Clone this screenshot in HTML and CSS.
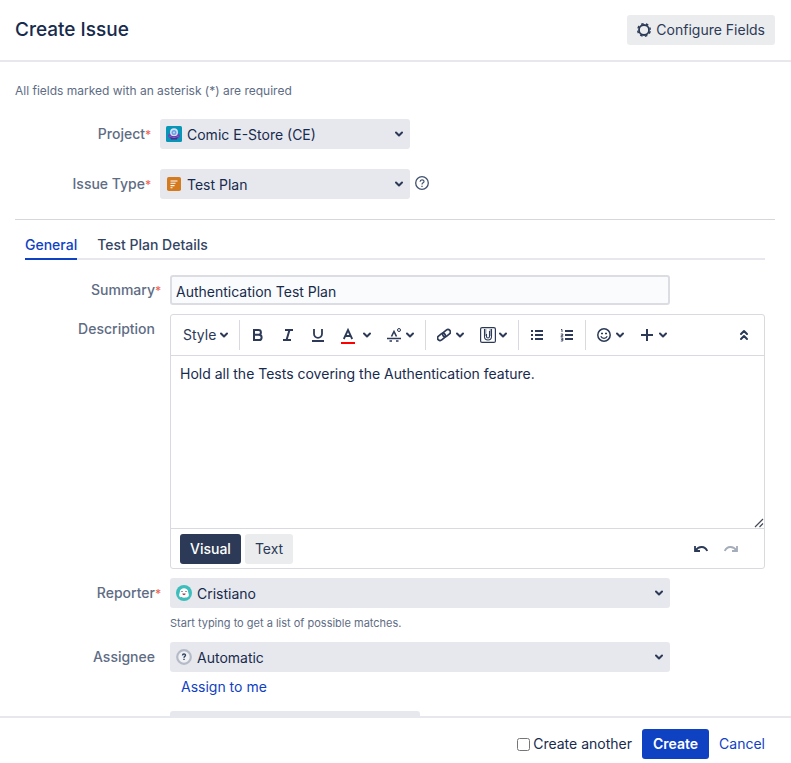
FILE: index.html
```html
<!DOCTYPE html>
<html lang="en">
<head>
  <meta charset="UTF-8" />
  <meta name="viewport" content="width=device-width, initial-scale=1" />
  <title>Create Issue</title>
  <link rel="stylesheet" href="styles.css">
</head>
<body>
  <!-- shared icon -->
  <svg class="defs" width="0" height="0" aria-hidden="true">
    <symbol id="chevron" viewBox="0 0 8 8"><path d="M1 2.5l3 3 3-3" fill="none" stroke="currentColor" stroke-width="2" stroke-linecap="round" stroke-linejoin="round"/></symbol>
  </svg>

  <form class="dialog">
    <header class="dialog-header">
      <h1>Create Issue</h1>
      <button type="button" class="btn">
        <svg width="14" height="14" viewBox="0 0 14 14"><circle cx="7" cy="7" r="5" fill="none" stroke="currentColor" stroke-width="1.8"/><circle cx="7" cy="7" r="6.3" fill="none" stroke="currentColor" stroke-width="1.4" stroke-dasharray="2.5 2.448" stroke-dashoffset="3.7"/></svg>
        Configure Fields
      </button>
    </header>

    <main class="dialog-body">
      <p class="required-note">All fields marked with an asterisk (*) are required</p>

      <div class="top-fields">
        <div class="field">
          <label for="project">Project<span class="star">*</span></label>
          <div class="select medium">
            <svg class="select-icon" width="16" height="16" viewBox="0 0 16 16"><rect width="16" height="16" rx="1.5" fill="#0796b5"/><ellipse cx="8" cy="9.8" rx="6" ry="3.2" fill="#6f42b8"/><path d="M4 10h8l-1 3.6H5z" fill="#4b2a91"/><circle cx="8" cy="6.2" r="4" fill="#d5e1f8"/><circle cx="8" cy="6.6" r="2.5" fill="#6b9de0"/><circle cx="8" cy="6.6" r="1.1" fill="#b9d5fa"/><path d="M3.5 10.4q4.5 2.4 9 0" fill="none" stroke="#8c5fd0"/></svg>
            <select id="project"><option>Comic E-Store (CE)</option></select>
            <svg class="select-arrow" width="8" height="8"><use href="#chevron"/></svg>
          </div>
        </div>
        <div class="field">
          <label for="issue-type">Issue Type<span class="star">*</span></label>
          <div class="select medium">
            <svg class="select-icon" width="16" height="16" viewBox="0 0 16 16"><rect x="1" y="1" width="14" height="14" rx="1.8" fill="#d47b20"/><path d="M4.5 5h7M4.5 7.3h5M4.5 9.6h4M4.5 11.8h2" stroke="#fff" stroke-width="1.1"/></svg>
            <select id="issue-type"><option>Test Plan</option></select>
            <svg class="select-arrow" width="8" height="8"><use href="#chevron"/></svg>
          </div>
          <button type="button" class="help" aria-label="Help">
            <svg width="14" height="14" viewBox="0 0 14 14" fill="none" stroke="currentColor"><circle cx="7" cy="7" r="6.3" stroke-width="1.3"/><path d="M5.1 5.7c0-2.4 3.9-2.4 3.9-.2C9 6.9 7 6.8 7 8.5" stroke-width="1.2"/><path d="M7 9.7V11" stroke-width="1.3"/></svg>
          </button>
        </div>
      </div>

      <nav class="tabs">
        <a href="#general" class="active">General</a>
        <a href="#details">Test Plan Details</a>
      </nav>

      <section class="fields" id="general">
        <div class="field">
          <label for="summary">Summary<span class="star">*</span></label>
          <input type="text" id="summary" class="long" value="Authentication Test Plan">
        </div>

        <div class="field">
          <label for="description">Description</label>
          <div class="editor">
            <div class="toolbar">
              <button type="button" class="style">Style<svg width="8" height="8"><use href="#chevron"/></svg></button>
              <span class="sep"></span>
              <button type="button" aria-label="Bold"><svg width="14" height="14" viewBox="0 0 14 14" fill="none" stroke="currentColor" stroke-width="2"><path d="M3 2h4.5a2.3 2.3 0 0 1 0 4.8H3zM3 6.800h5a2.600 2.600 0 0 1 0 5.200H3z"/></svg></button>
              <button type="button" aria-label="Italic"><svg width="14" height="14" viewBox="0 0 14 14" fill="none" stroke="currentColor" stroke-width="2"><path d="M4 2h8M2 12h8M8.500 2l-3 10"/></svg></button>
              <button type="button" aria-label="Underline"><svg width="14" height="14" viewBox="0 0 14 14" fill="none" stroke="currentColor" stroke-width="1.8"><path d="M3 1v4.800a4 4 0 0 0 8 0V1M1 13h12"/></svg></button>
              <button type="button" class="color" aria-label="Text colour"><svg width="14" height="18" viewBox="0 0 14 18" fill="none" stroke="currentColor" stroke-width="1.8"><path d="M2.800 13L7 4l4.200 9M4.500 10h5"/><path d="M0 17h14" stroke="#f00" stroke-width="2"/></svg><svg width="8" height="8"><use href="#chevron"/></svg></button>
              <button type="button" aria-label="More formatting"><svg width="14" height="14" viewBox="0 0 14 14" fill="none" stroke="currentColor" stroke-width="1.6"><path d="M4.500 8.500L7 3.500l2.500 5M0 10.500h14M2.500 13h2.500M9 13h2.500"/><circle cx="12" cy="2" r="1.500" stroke-width="1"/></svg><svg width="8" height="8"><use href="#chevron"/></svg></button>
              <span class="sep"></span>
              <button type="button" aria-label="Link"><svg width="14" height="14" viewBox="0 0 14 14" fill="none" stroke="currentColor" stroke-width="1.7"><rect x="5.200" y="2.600" width="8.600" height="5" rx="2.500" transform="rotate(-40 9.500 5.100)"/><rect x=".2" y="6.400" width="8.600" height="5" rx="2.500" transform="rotate(-40 4.500 8.900)"/></svg><svg width="8" height="8"><use href="#chevron"/></svg></button>
              <button type="button" class="attach" aria-label="Attachment"><svg width="16" height="16" viewBox="0 0 16 16" fill="none" stroke="currentColor"><rect x=".6" y=".6" width="14.800" height="14.800" rx="1.500" stroke-width="1.200"/><path d="M5.500 2v7M10.500 2v7" stroke="#a5adba" stroke-width="2"/><path d="M4.500 2v7.500a3.500 3.500 0 0 0 7 0V2M6.500 7v2.500a1.500 1.500 0 0 0 3 0V4" stroke-width="1.100"/></svg><svg width="8" height="8"><use href="#chevron"/></svg></button>
              <span class="sep"></span>
              <button type="button" aria-label="Bullet list"><svg width="14" height="14" viewBox="0 0 14 14" stroke="currentColor" stroke-width="2"><path d="M5 3h8M5 7h8M5 11h8M1 3h2M1 7h2M1 11h2"/></svg></button>
              <button type="button" aria-label="Numbered list"><svg width="14" height="14" viewBox="0 0 14 14" fill="none" stroke="currentColor" stroke-width="2"><path d="M5 3h8M5 7h8M5 11h8"/><path d="M1 1.500h1V4M.8 6h2v1.200l-2 1h2.400M.8 10h2v3h-2M1.200 11.500h1.500" stroke-width=".9"/></svg></button>
              <span class="sep"></span>
              <button type="button" aria-label="Emoji"><svg width="14" height="14" viewBox="0 0 14 14" fill="none" stroke="currentColor"><circle cx="7" cy="7" r="6.200" stroke-width="1.500"/><path d="M3.800 8.300c1.200 2.800 5.200 2.800 6.400 0" stroke-width="1.300"/><path d="M4 5.500h2M8 5.500h2" stroke-width="1.600"/></svg><svg width="8" height="8"><use href="#chevron"/></svg></button>
              <button type="button" aria-label="Insert"><svg width="14" height="14" viewBox="0 0 14 14" stroke="currentColor" stroke-width="2"><path d="M7 1v12M1 7h12"/></svg><svg width="8" height="8"><use href="#chevron"/></svg></button>
              <button type="button" class="push" aria-label="Collapse toolbar"><svg width="14" height="14" viewBox="0 0 14 14" fill="none" stroke="currentColor" stroke-width="2" stroke-linecap="round" stroke-linejoin="round"><path d="M4 6l3-3 3 3M4 11l3-3 3 3"/></svg></button>
            </div>
            <div class="editor-text">
              <textarea id="description">Hold all the Tests covering the Authentication feature.</textarea>
              <svg class="grip" width="10" height="10" viewBox="0 0 10 10" stroke="#444b58" stroke-width="1.200"><path d="M1 9l8-8M5.500 9L9 5.500"/></svg>
            </div>
            <div class="editor-footer">
              <button type="button" class="btn selected">Visual</button>
              <button type="button" class="btn">Text</button>
              <button type="button" class="history push" aria-label="Undo"><svg width="14" height="8" viewBox="0 0 14 8" fill="none" stroke="currentColor" stroke-width="1.800"><path d="M1 1v5h5M1.500 5.500C5 .5 11 1 13.200 6"/></svg></button>
              <button type="button" class="history" aria-label="Redo" disabled><svg width="14" height="8" viewBox="0 0 14 8" fill="none" stroke="currentColor" stroke-width="1.800"><path d="M13 1v5H8M12.500 5.500C9 .5 3 1 .8 6"/></svg></button>
            </div>
          </div>
        </div>

        <div class="field">
          <label for="reporter">Reporter<span class="star">*</span></label>
          <div class="control">
            <div class="select long">
              <svg class="select-icon" width="16" height="16" viewBox="0 0 16 16"><circle cx="8" cy="8" r="8" fill="#3dbdbb"/><path d="M3.500 11.500c-1-2 .3-3 .3-4.500C4 2 12 2 12.200 7c0 1.500 1.300 2.500.3 4.500-1.200 1.600-7.800 1.600-9 0z" fill="#fff"/><path d="M5.500 6.500h1M9.500 6.500h1" stroke="#253858"/><path d="M6.300 8.500h3.400c-.4 2.200-3 2.200-3.400 0z" fill="#a34560"/></svg>
              <select id="reporter"><option>Cristiano</option></select>
              <svg class="select-arrow" width="8" height="8"><use href="#chevron"/></svg>
            </div>
            <p class="hint">Start typing to get a list of possible matches.</p>
          </div>
        </div>

        <div class="field">
          <label for="assignee">Assignee</label>
          <div class="control">
            <div class="select long">
              <svg class="select-icon" width="16" height="16" viewBox="0 0 16 16" fill="none"><circle cx="8" cy="8" r="6.800" fill="#f0f1f4" stroke="#b4bbc7" stroke-width="2.200"/><path d="M6.500 6.500c0-2 3-2 3-.2C9.500 7.500 8 7.300 8 8.800M8 9.800V11" stroke="#344563" stroke-width="1.400"/></svg>
              <select id="assignee"><option>Automatic</option></select>
              <svg class="select-arrow" width="8" height="8"><use href="#chevron"/></svg>
            </div>
            <a href="#" class="assign">Assign to me</a>
          </div>
        </div>

        <div class="field">
          <div class="select medium indent">
            <select id="priority" aria-label="Priority"></select>
          </div>
        </div>
      </section>
    </main>

    <footer class="dialog-footer">
      <input type="checkbox" id="another">
      <label for="another">Create another</label>
      <button type="submit" class="btn primary">Create</button>
      <a href="#">Cancel</a>
    </footer>
  </form>
</body>
</html>
```

FILE: styles.css
```css
* { box-sizing: border-box; }
body { margin: 0; background: #fff; color: #172b4d; font-family: Inter, Roboto, sans-serif; font-size: 14px; line-height: 20px; }
button, input, select, textarea { font: inherit; color: inherit; }
a { color: #0f41c3; text-decoration: none; }
h1, p { margin: 0; }
svg { flex: none; }
.defs { position: absolute; }

.dialog { display: flex; flex-direction: column; height: 100vh; }
.dialog-header { display: flex; flex: none; align-items: center; justify-content: space-between; padding: 15px 16px 15px 15px; border-bottom: 2px solid #e7e8ed; }
.dialog-header h1 { font-size: 19px; line-height: 30px; font-weight: 500; }
.dialog-body { flex: 1; min-height: 0; overflow: hidden; padding: 19px 16px 0 15px; }
.dialog-footer { display: flex; flex: none; align-items: center; justify-content: flex-end; padding: 11px 26px 4px 15px; border-top: 2px solid #e7e8ed; }
.dialog-footer input { width: 13px; height: 13px; margin: 0 3px 0 0; }
.dialog-footer .btn { margin: 0 10px; }

.btn { display: flex; align-items: center; gap: 5px; height: 30px; padding: 0 10px; border: 0; border-radius: 3px; background: #ebecee; color: #2c3a57; }
.btn.selected { background: #2c3a57; color: #fff; font-weight: 500; }
.btn.primary { padding: 0 11px; background: #0f41c3; color: #fff; font-weight: 600; }

.required-note { font-size: 12px; color: #5e6c84; }
.top-fields { display: flex; flex-direction: column; gap: 20px; padding: 18px 0 20px; border-bottom: 1px solid #d5d7db; }

/* label column + control */
.field { display: flex; }
.field > label { flex: none; width: 130px; margin-right: 15px; line-height: 30px; text-align: right; font-weight: 500; color: #5e6c84; }
.star { display: inline-block; width: 6px; margin-right: -6px; color: #f0685a; font-size: 12px; line-height: 1; }
.control { flex: 1; }
.select { position: relative; height: 30px; color: #2c3a57; }
.select select { width: 100%; height: 30px; padding: 2px 25px 0 27px; border: 0; border-radius: 3px; background: #e7e8ed; color: #172b4d; appearance: none; }
.select-icon { position: absolute; top: 7px; left: 6px; }
.select-arrow { position: absolute; top: 11px; right: 7px; }
.medium { width: 250px; }
.long { width: 100%; max-width: 500px; }
.indent { margin-left: 145px; }
.help { display: flex; align-items: center; height: 28px; padding: 0 5px; border: 0; background: none; color: #42526e; }

.tabs { display: flex; gap: 20px; margin: 15px 10px 0; border-bottom: 2px solid #e7e8ed; }
.tabs a { margin-bottom: -2px; padding-bottom: 3px; border-bottom: 2px solid transparent; color: #344563; font-weight: 500; }
.tabs .active { border-color: #0f41c3; color: #0f41c3; }

.fields { display: flex; flex-direction: column; gap: 9px; padding: 15px 10px 0; }
.fields input { height: 30px; padding: 2px 4px 0; border: 2px solid #dcdde2; border-radius: 3px; background: #fafbfc; }
.hint { height: 25px; padding: 5px 0; font-size: 11px; color: #5e6c84; }
.assign { display: block; margin: 5px 11px; }

.editor { flex: 1; border: 1px solid #d9dadf; border-radius: 3px; }
.toolbar { display: flex; align-items: center; height: 41px; padding: 0 5px 0 4px; border-bottom: 1px solid #d9dadf; }
.toolbar button, .history { display: flex; align-items: center; gap: 5px; height: 30px; padding: 0 8px; border: 0; background: none; color: #2c3a57; }
.toolbar .color { gap: 8px; }
.toolbar .attach { gap: 3px; }
.toolbar .style { gap: 4px; }
.sep { width: 1px; height: 30px; margin: 0 3px; background: #d9dadf; }
.toolbar .push, .editor-footer .push { margin-left: auto; }
.editor-text { position: relative; }
.editor-text textarea { display: block; width: 100%; height: 172px; padding: 8px 9px; border: 0; background: none; resize: none; }
.grip { position: absolute; right: 0; bottom: 0; }
.editor-footer { display: flex; align-items: center; gap: 4px; height: 40px; padding: 0 18px 0 9px; border-top: 1px solid #d9dadf; }
.history:disabled { color: #a5adba; }
.history + .history { margin-left: -4px; }
```
